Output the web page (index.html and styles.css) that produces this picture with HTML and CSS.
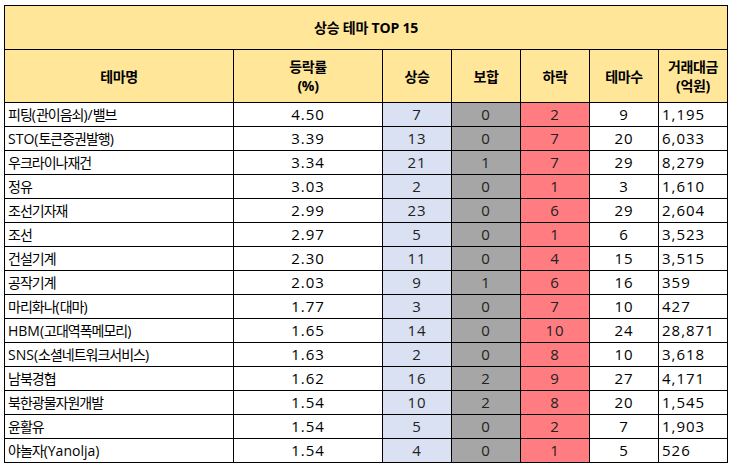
FILE: index.html
```html
<!DOCTYPE html>
<html lang="ko">
<head>
<meta charset="utf-8">
<link rel="stylesheet" href="styles.css">
</head>
<body>
<div class="wrap">
<table class="sheet">
<colgroup>
<col class="c-name"><col class="c-rate"><col class="c-n"><col class="c-n"><col class="c-n"><col class="c-n"><col class="c-amt">
</colgroup>
<thead>
<tr class="title-row"><th colspan="7">상승 테마 TOP 15</th></tr>
<tr class="head-row">
<th>테마명</th><th>등락률<br>(%)</th><th>상승</th><th>보합</th><th>하락</th><th>테마수</th><th>거래대금<br>(억원)</th>
</tr>
</thead>
<tbody>
<tr><td class="name">피팅<span class="lat">(</span>관이음쇠<span class="lat">)/</span>밸브</td><td class="ctr">4.50</td><td class="up">7</td><td class="flat">0</td><td class="down">2</td><td class="ctr">9</td><td class="amt">1,195</td></tr>
<tr><td class="name"><span class="lat">STO(</span>토큰증권발행<span class="lat">)</span></td><td class="ctr">3.39</td><td class="up">13</td><td class="flat">0</td><td class="down">7</td><td class="ctr">20</td><td class="amt">6,033</td></tr>
<tr><td class="name">우크라이나재건</td><td class="ctr">3.34</td><td class="up">21</td><td class="flat">1</td><td class="down">7</td><td class="ctr">29</td><td class="amt">8,279</td></tr>
<tr><td class="name">정유</td><td class="ctr">3.03</td><td class="up">2</td><td class="flat">0</td><td class="down">1</td><td class="ctr">3</td><td class="amt">1,610</td></tr>
<tr><td class="name">조선기자재</td><td class="ctr">2.99</td><td class="up">23</td><td class="flat">0</td><td class="down">6</td><td class="ctr">29</td><td class="amt">2,604</td></tr>
<tr><td class="name">조선</td><td class="ctr">2.97</td><td class="up">5</td><td class="flat">0</td><td class="down">1</td><td class="ctr">6</td><td class="amt">3,523</td></tr>
<tr><td class="name">건설기계</td><td class="ctr">2.30</td><td class="up">11</td><td class="flat">0</td><td class="down">4</td><td class="ctr">15</td><td class="amt">3,515</td></tr>
<tr><td class="name">공작기계</td><td class="ctr">2.03</td><td class="up">9</td><td class="flat">1</td><td class="down">6</td><td class="ctr">16</td><td class="amt">359</td></tr>
<tr><td class="name">마리화나<span class="lat">(</span>대마<span class="lat">)</span></td><td class="ctr">1.77</td><td class="up">3</td><td class="flat">0</td><td class="down">7</td><td class="ctr">10</td><td class="amt">427</td></tr>
<tr><td class="name"><span class="lat">HBM(</span>고대역폭메모리<span class="lat">)</span></td><td class="ctr">1.65</td><td class="up">14</td><td class="flat">0</td><td class="down">10</td><td class="ctr">24</td><td class="amt">28,871</td></tr>
<tr><td class="name"><span class="lat">SNS(</span>소셜네트워크서비스<span class="lat">)</span></td><td class="ctr">1.63</td><td class="up">2</td><td class="flat">0</td><td class="down">8</td><td class="ctr">10</td><td class="amt">3,618</td></tr>
<tr><td class="name">남북경협</td><td class="ctr">1.62</td><td class="up">16</td><td class="flat">2</td><td class="down">9</td><td class="ctr">27</td><td class="amt">4,171</td></tr>
<tr><td class="name">북한광물자원개발</td><td class="ctr">1.54</td><td class="up">10</td><td class="flat">2</td><td class="down">8</td><td class="ctr">20</td><td class="amt">1,545</td></tr>
<tr><td class="name">윤활유</td><td class="ctr">1.54</td><td class="up">5</td><td class="flat">0</td><td class="down">2</td><td class="ctr">7</td><td class="amt">1,903</td></tr>
<tr><td class="name">야놀자<span class="lat">(Yanolja)</span></td><td class="ctr">1.54</td><td class="up">4</td><td class="flat">0</td><td class="down">1</td><td class="ctr">5</td><td class="amt">526</td></tr>
</tbody>
</table>
</div>
</body>
</html>
```
FILE: styles.css
```css
html, body {
  margin: 0;
  padding: 0;
  background: #ffffff;
}
.wrap {
  padding: 5px 0 0 4px;
}
.sheet {
  border-collapse: collapse;
  table-layout: fixed;
  width: 724px;
  font-family: "Open Sans", "Noto Sans CJK KR", sans-serif;
  font-size: 14px;
  color: #000;
}
.c-name { width: 229px; }
.c-rate { width: 149px; }
.c-n { width: 69px; }
.c-amt { width: 69px; }
.sheet th, .sheet td {
  border: 1px solid #000;
  padding: 0 3px;
  line-height: 19px;
  white-space: nowrap;
  overflow: hidden;
}
.title-row th {
  height: 43px;
  background: #ffe699;
  font-weight: bold;
  text-align: center;
  letter-spacing: -0.2px;
}
.head-row th {
  height: 52px;
  background: #ffe699;
  font-weight: bold;
  text-align: center;
  letter-spacing: -0.3px;
}
.sheet td {
  height: 23px;
  font-size: 15px;
  letter-spacing: 1px;
}
.sheet td.name {
  text-align: left;
  font-size: 14px;
  letter-spacing: -1px;
}
.name .lat {
  letter-spacing: 0;
}
.ctr { text-align: center; }
.amt { text-align: left; }
.up { background: #d9e1f2; text-align: center; color: #222; }
.flat { background: #a6a6a6; text-align: center; color: #222; }
.down { background: #ff7c80; text-align: center; color: #222; }
```
